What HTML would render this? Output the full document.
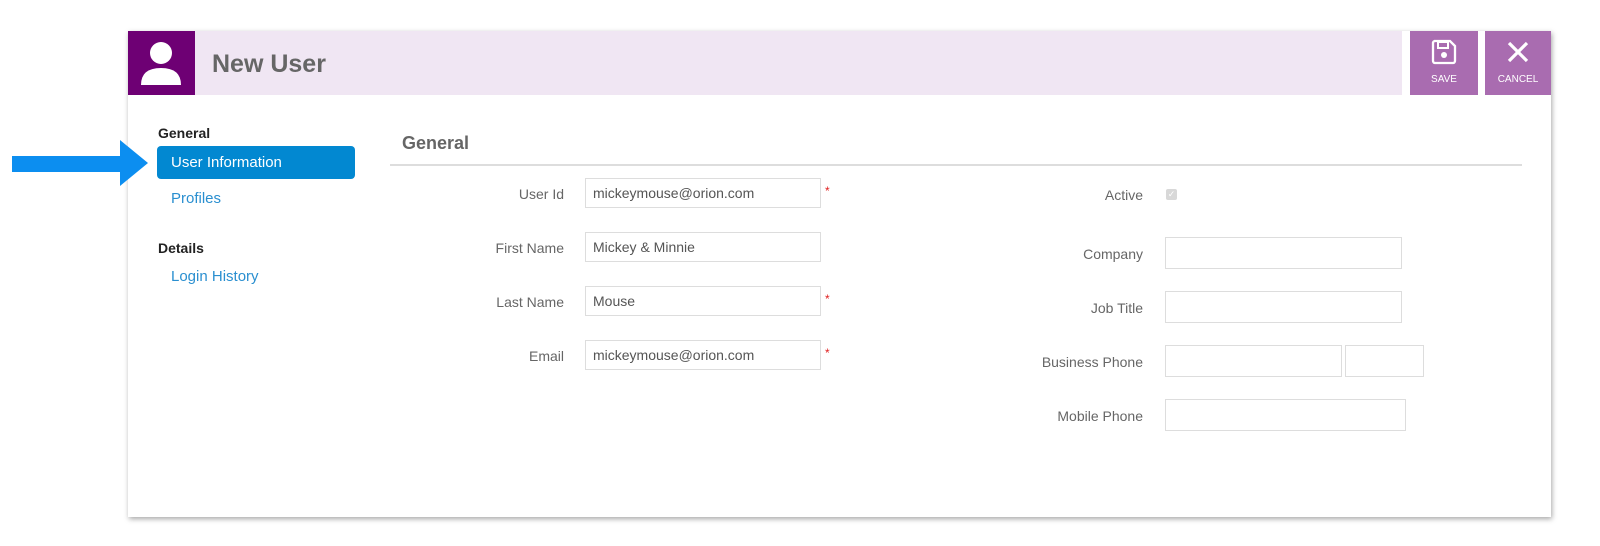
<!DOCTYPE html>
<html><head><style>
body{margin:0;width:1600px;height:546px;background:#fff;position:relative;font-family:"Liberation Sans",sans-serif;overflow:hidden}
.a{position:absolute}
.panel{left:128px;top:31px;width:1423px;height:486px;background:#fff;box-shadow:1px 2px 5px rgba(0,0,0,.35)}
.lbl{font-size:14px;color:#666;text-align:right;width:200px}
.inp{border:1px solid #ddd;height:30px;box-sizing:border-box;font-size:14px;color:#555;padding:6px 7px}
.req{color:#e02020;font-size:12px}
</style></head><body>
<div class="a panel">
 <div class="a" style="left:0;top:0;width:67px;height:64px;background:#6e0074">
  <svg width="67" height="64"><circle cx="33" cy="22" r="11" fill="#fff"/><path d="M13 54 Q13 37 33 37 Q53 37 53 54 Z" fill="#fff"/></svg>
 </div>
 <div class="a" style="left:67px;top:0;width:1207px;height:64px;background:#f0e6f3"></div>
 <div class="a" style="left:84px;top:19px;font-size:25px;font-weight:bold;color:#666">New User</div>
 <div class="a" style="left:1282px;top:0;width:68px;height:64px;background:#a96cb0;color:#fff;font-size:10px;text-align:center">
  <svg style="margin-top:7px" width="28" height="28" viewBox="0 0 28 28"><path d="M4 3h16l5 5v15a2 2 0 0 1-2 2H5a2 2 0 0 1-2-2V5a2 2 0 0 1 2-2z" fill="none" stroke="#fff" stroke-width="2.3"/><rect x="8" y="4" width="10" height="6" fill="none" stroke="#fff" stroke-width="2"/><circle cx="14" cy="17" r="3" fill="#fff"/></svg>
  <div style="margin-top:5px">SAVE</div></div>
 <div class="a" style="left:1357px;top:0;width:66px;height:64px;background:#a96cb0;color:#fff;font-size:10px;text-align:center">
  <svg style="margin-top:9px" width="24" height="24" viewBox="0 0 24 24"><path d="M3 3L21 21M21 3L3 21" stroke="#fff" stroke-width="3.2"/></svg>
  <div style="margin-top:7px">CANCEL</div></div>
 <div class="a" style="left:30px;top:94px;font-size:14px;font-weight:bold;color:#222">General</div>
 <div class="a" style="left:29px;top:115px;width:198px;height:33px;background:#0288d1;border-radius:4px"></div>
 <div class="a" style="left:43px;top:123px;font-size:15px;color:#fff">User Information</div>
 <div class="a" style="left:43px;top:159px;font-size:15px;color:#2a8fd0">Profiles</div>
 <div class="a" style="left:30px;top:209px;font-size:14px;font-weight:bold;color:#222">Details</div>
 <div class="a" style="left:43px;top:237px;font-size:15px;color:#2a8fd0">Login History</div>
 <div class="a" style="left:274px;top:102px;font-size:18px;font-weight:bold;color:#666">General</div>
 <div class="a" style="left:262px;top:133px;width:1132px;height:2px;background:#ddd"></div>

 <div class="a lbl" style="left:236px;top:155px">User Id</div>
 <div class="a inp" style="left:457px;top:147px;width:236px">mickeymouse@orion.com</div><div class="a req" style="left:697px;top:153px">*</div>
 <div class="a lbl" style="left:236px;top:209px">First Name</div>
 <div class="a inp" style="left:457px;top:201px;width:236px">Mickey &amp; Minnie</div>
 <div class="a lbl" style="left:236px;top:263px">Last Name</div>
 <div class="a inp" style="left:457px;top:255px;width:236px">Mouse</div><div class="a req" style="left:697px;top:261px">*</div>
 <div class="a lbl" style="left:236px;top:317px">Email</div>
 <div class="a inp" style="left:457px;top:309px;width:236px">mickeymouse@orion.com</div><div class="a req" style="left:697px;top:315px">*</div>

 <div class="a lbl" style="left:815px;top:156px">Active</div>
 <div class="a" style="left:1038px;top:158px;width:11px;height:11px;background:#d8d8d8;border-radius:2px;color:#fff;font-size:9px;line-height:11px;text-align:center">✓</div>
 <div class="a lbl" style="left:815px;top:215px">Company</div>
 <div class="a inp" style="left:1037px;top:206px;width:237px;height:32px"></div>
 <div class="a lbl" style="left:815px;top:269px">Job Title</div>
 <div class="a inp" style="left:1037px;top:260px;width:237px;height:32px"></div>
 <div class="a lbl" style="left:815px;top:323px">Business Phone</div>
 <div class="a inp" style="left:1037px;top:314px;width:177px;height:32px"></div>
 <div class="a inp" style="left:1217px;top:314px;width:79px;height:32px"></div>
 <div class="a lbl" style="left:815px;top:377px">Mobile Phone</div>
 <div class="a inp" style="left:1037px;top:368px;width:241px;height:32px"></div>
</div>
<svg class="a" style="left:12px;top:140px;z-index:5" width="137" height="48"><polygon points="0,16 108,16 108,0 136,23 108,46 108,32 0,32" fill="#0c8ef0"/></svg>
</body></html>
